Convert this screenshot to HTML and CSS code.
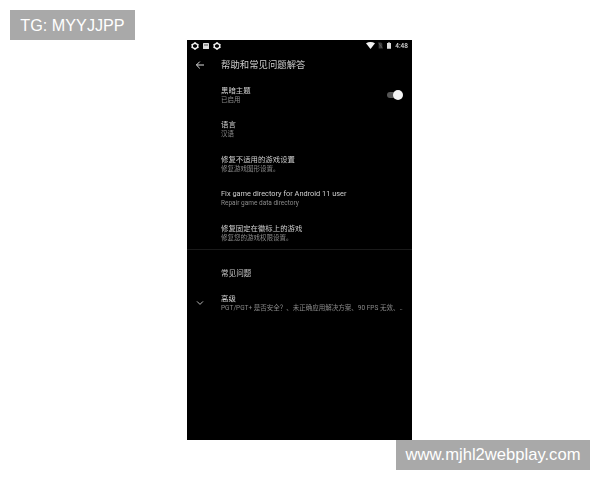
FILE: index.html
```html
<!DOCTYPE html>
<html lang="zh">
<head>
<meta charset="utf-8">
<title>帮助和常见问题解答</title>
<link rel="stylesheet" href="styles.css">
</head>
<body>
<div class="badge badge-top">TG: MYYJJPP</div>
<main class="phone">
  <div class="status">
    <div class="status-left">
      <svg class="si" viewBox="0 0 8 8"><path d="M4 .9 5.2 1.9 6.9 2.6 6.6 4 6.9 5.4 5.2 6.1 4 7.1 2.8 6.1 1.1 5.4 1.4 4 1.1 2.6 2.8 1.9Z" fill="none" stroke="#f4f4f4" stroke-width="1.5"/></svg>
      <svg class="si" viewBox="0 0 8 8"><rect x="1" y="1" width="6" height="6" rx=".6" fill="#ddd"/><path d="M2 3h4" stroke="#555" stroke-width="1"/></svg>
      <svg class="si" viewBox="0 0 8 8"><path d="M4 .9 5.2 1.9 6.9 2.6 6.6 4 6.9 5.4 5.2 6.1 4 7.1 2.8 6.1 1.1 5.4 1.4 4 1.1 2.6 2.8 1.9Z" fill="none" stroke="#f4f4f4" stroke-width="1.5"/></svg>
    </div>
    <div class="status-right">
      <svg class="wifi" viewBox="0 0 9 7"><path d="M0 1.2Q4.5-1 9 1.2L4.5 7Z" fill="#f2f2f2"/></svg>
      <svg class="sim" viewBox="0 0 6 8"><path d="M.8.5h3L5.2 2v5.5H.8Z" fill="#3d3d3d"/><path d="M.5.5l5 7" stroke="#777" stroke-width=".6"/></svg>
      <svg class="batt" viewBox="0 0 5 8"><path d="M1.6 0h1.8v1H5v7H0V1h1.6Z" fill="#ddd"/></svg>
      <span class="time">4:48</span>
    </div>
  </div>
  <header class="appbar">
    <svg class="back" viewBox="0 0 10 10"><path d="M9 5H1.4M4.8 1.6 1.4 5l3.4 3.4" fill="none" stroke="#ddd" stroke-width="1"/></svg>
    <h1 class="heading">帮助和常见问题解答</h1>
  </header>
  <section class="settings">
    <div class="row">
      <div class="copy"><div class="title">黑暗主题</div><div class="sub">已启用</div></div>
      <div class="switch"><span class="knob"></span></div>
    </div>
    <div class="row"><div class="copy"><div class="title">语言</div><div class="sub">汉语</div></div></div>
    <div class="row"><div class="copy"><div class="title">修复不适用的游戏设置</div><div class="sub">修复游戏图形设置。</div></div></div>
    <div class="row"><div class="copy"><div class="title">Fix game directory for Android 11 user</div><div class="sub">Repair game data directory</div></div></div>
    <div class="row"><div class="copy"><div class="title">修复固定在徽标上的游戏</div><div class="sub">修复您的游戏权限设置。</div></div></div>
  </section>
  <section class="faq">
    <div class="faq-title">常见问题</div>
    <div class="advanced">
      <svg class="chev" viewBox="0 0 8 6"><path d="M1 1.4 4 4.4 7 1.4" fill="none" stroke="#ccc" stroke-width=".9"/></svg>
      <div class="copy"><div class="title">高级</div><div class="sub">PGT/PGT+ 是否安全？、未正确应用解决方案、90 FPS 无效、..</div></div>
    </div>
  </section>
</main>
<div class="badge badge-bottom">www.mjhl2webplay.com</div>
</body>
</html>
```
FILE: styles.css
```css
* { box-sizing: border-box; }
html, body { margin: 0; height: 480px; overflow: hidden; background: #fff; }
body { position: relative; font-family: "Roboto", "Noto Sans CJK SC", sans-serif; padding: 40px 0 0 187px; }
.badge { position: absolute; background: #a9a9a9; color: #fff; height: 30px; display: flex; align-items: center; justify-content: center; font-family: "Liberation Sans", sans-serif; font-weight: 400; }
.badge-top { left: 10px; top: 10px; width: 125px; font-size: 16.2px; }
.badge-bottom { left: 396px; top: 440px; width: 194px; font-size: 16.6px; }
.phone { width: 225px; height: 400px; background: #000; color: #ccc; }
.status, .appbar, .settings, .faq { filter: blur(.25px); }
.status { height: 11px; padding: 0 4px 0 4px; display: flex; justify-content: space-between; align-items: center; }
.status-left { display: flex; gap: 3px; }
.si { width: 8px; height: 8px; display: block; }
.status-right { display: flex; align-items: center; gap: 3px; }
.wifi { width: 9px; height: 7px; display: block; }
.sim { width: 5px; height: 7px; display: block; }
.batt { width: 4px; height: 7px; display: block; margin-left: 1px; }
.time { font-size: 6.5px; font-weight: 500; color: #ddd; margin-left: 1px; }
.appbar { height: 27px; display: flex; align-items: center; padding-left: 8px; }
.back { width: 10px; height: 10px; display: block; margin-right: 16px; }
.heading { margin: 0; font-size: 9.4px; font-weight: 400; color: #ccc; line-height: 12px; }
.settings { border-bottom: 1px solid #1a1a1a; height: 172px; }
.row { height: 34.5px; padding: 0 10px 0 34px; display: flex; align-items: center; justify-content: space-between; }
.copy { min-width: 0; }
.title { font-size: 7.4px; line-height: 10px; color: #d0d0d0; white-space: nowrap; }
.sub { font-size: 6.5px; line-height: 9px; color: #8a8a8a; white-space: nowrap; }
.switch { position: relative; width: 15px; height: 6px; border-radius: 3px; background: #555; }
.knob { position: absolute; right: -1px; top: -2px; width: 10px; height: 10px; border-radius: 50%; background: #f4f4f4; }
.faq { padding-top: 19px; }
.faq-title { padding-left: 34px; font-size: 7.6px; line-height: 10px; color: #c8c8c8; }
.advanced { display: flex; align-items: center; margin-top: 14.5px; padding-left: 9px; }
.chev { width: 8px; height: 6px; display: block; margin-right: 17px; }
```
